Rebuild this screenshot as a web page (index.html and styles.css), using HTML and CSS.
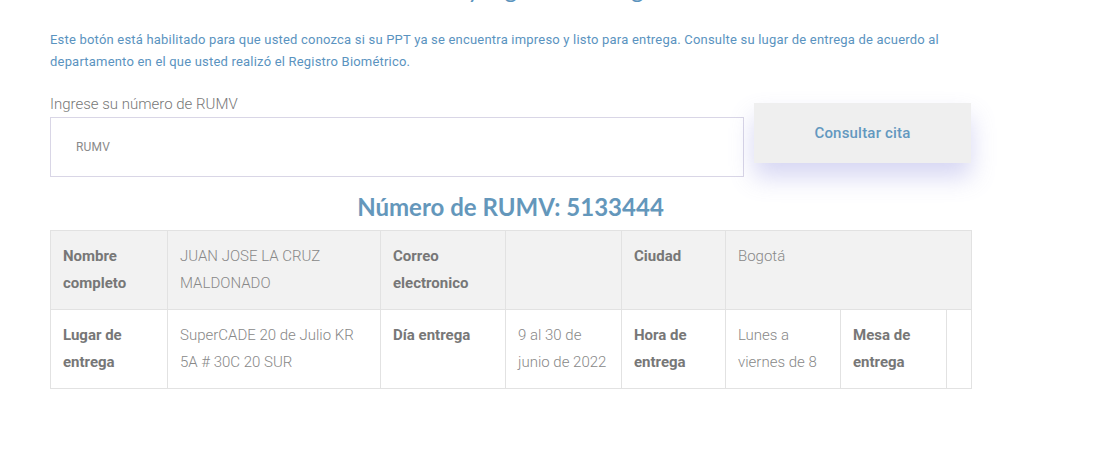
FILE: index.html
```html
<!DOCTYPE html>
<html lang="es">
<head>
<meta charset="utf-8">
<title>Consulta RUMV</title>
<link rel="stylesheet" href="styles.css">
</head>
<body>
<main class="page">
  <h2 class="page-title">Consulta fecha y lugar de entrega</h2>
  <p class="intro">Este botón está habilitado para que usted conozca si su PPT ya se encuentra impreso y listo para entrega. Consulte su lugar de entrega de acuerdo al departamento en el que usted realizó el Registro Biométrico.</p>

  <form class="search">
    <div class="field">
      <label class="field-label" for="rumv">Ingrese su número de RUMV</label>
      <input class="field-input" id="rumv" type="text" placeholder="RUMV">
    </div>
    <button class="btn" type="button">Consultar cita</button>
  </form>

  <h3 class="result-title">Número de RUMV: 5133444</h3>

  <table class="result">
    <colgroup>
      <col class="c1"><col class="c2"><col class="c3"><col class="c4"><col class="c5"><col class="c6"><col class="c7"><col class="c8">
    </colgroup>
    <tr class="shaded">
      <th>Nombre completo</th>
      <td>JUAN JOSE LA CRUZ MALDONADO</td>
      <th>Correo electronico</th>
      <td></td>
      <th>Ciudad</th>
      <td colspan="3">Bogotá</td>
    </tr>
    <tr>
      <th>Lugar de entrega</th>
      <td>SuperCADE 20 de Julio KR 5A # 30C 20 SUR</td>
      <th>Día entrega</th>
      <td>9 al 30 de junio de 2022</td>
      <th>Hora de entrega</th>
      <td>Lunes a viernes de 8</td>
      <th>Mesa de entrega</th>
      <td></td>
    </tr>
  </table>
</main>
</body>
</html>
```

FILE: styles.css
```css
* { box-sizing: border-box; }

html, body {
  margin: 0;
  background: #fff;
}

body {
  font-family: Roboto, "Liberation Sans", sans-serif;
  overflow: hidden;
}

.page {
  width: 921px;
  margin-left: 50px;
}

.page-title {
  font-family: Lato, "Liberation Sans", sans-serif;
  font-size: 24px;
  line-height: 30px;
  font-weight: 400;
  color: #5b93bd;
  text-align: center;
  margin: -26px 0 0;
  padding-right: 60px;
}

.intro {
  margin: 25px 0 0;
  font-size: 13px;
  line-height: 22px;
  letter-spacing: 0.2px;
  color: #5a93c0;
  width: 921px;
}

.search {
  display: flex;
  align-items: flex-start;
  gap: 10px;
  margin-top: 19px;
}

.field {
  width: 694px;
  display: flex;
  flex-direction: column;
}

.field-label {
  font-size: 15px;
  font-weight: 300;
  color: #777;
  line-height: 20px;
  margin-top: 2px;
  margin-bottom: 3px;
}

.field-input {
  height: 60px;
  border: 1px solid #d9d6e6;
  padding: 0 25px;
  font-family: Roboto, "Liberation Sans", sans-serif;
  font-size: 12px;
  letter-spacing: 0.2px;
  color: #888;
  outline: none;
}

.field-input::placeholder {
  color: #8a8a8a;
  font-weight: 400;
}

.btn {
  width: 217px;
  height: 60px;
  margin-top: 11px;
  border: 0;
  background: #efefef;
  color: #6398bf;
  font-family: Roboto, "Liberation Sans", sans-serif;
  font-size: 15px;
  font-weight: 500;
  letter-spacing: 0.2px;
  box-shadow: 0 14px 24px rgba(120, 120, 215, 0.3);
}

.result-title {
  font-family: Lato, "Liberation Sans", sans-serif;
  font-size: 24px;
  font-weight: 700;
  color: #6497bb;
  text-align: center;
  margin: 14px 0 0;
  line-height: 32px;
}

.result {
  margin-top: 7px;
  width: 921px;
  border-collapse: collapse;
  table-layout: fixed;
  font-size: 15px;
  line-height: 27px;
}

.c1 { width: 117px; }
.c2 { width: 213px; }
.c3 { width: 125px; }
.c4 { width: 116px; }
.c5 { width: 104px; }
.c6 { width: 115px; }
.c7 { width: 106px; }
.c8 { width: 25px; }

.result th,
.result td {
  border: 1px solid #e2e2e2;
  padding: 12px 12px 12px;
  vertical-align: top;
  text-align: left;
}

.result th {
  font-weight: 700;
  color: #777;
}

.result td {
  font-weight: 300;
  color: #888;
}

.shaded {
  background: #f2f2f2;
}
```
